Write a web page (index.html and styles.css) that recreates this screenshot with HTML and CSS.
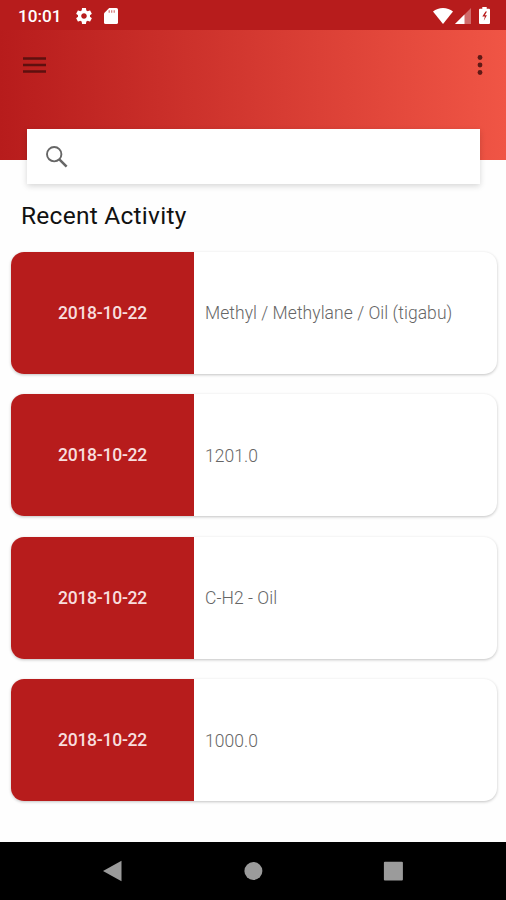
FILE: index.html
```html
<!DOCTYPE html>
<html lang="en">
<head>
    <meta charset="UTF-8">
    <meta name="viewport" content="width=device-width, initial-scale=1.0">
    <title>Recent Activity</title>
    <link rel="stylesheet" href="styles.css">
</head>
<body>
    <div class="status-bar">
        <span class="clock">10:01</span>
        <svg class="icon-gear" viewBox="2 2 20 20"><path d="M19.43 12.98c.04-.32.07-.64.07-.98s-.03-.66-.07-.98l2.11-1.65c.19-.15.24-.42.12-.64l-2-3.46c-.12-.22-.39-.3-.61-.22l-2.49 1c-.52-.4-1.08-.73-1.69-.98l-.38-2.65C14.46 2.18 14.25 2 14 2h-4c-.25 0-.46.18-.49.42l-.38 2.65c-.61.25-1.17.59-1.69.98l-2.49-1c-.23-.09-.49 0-.61.22l-2 3.46c-.13.22-.07.49.12.64l2.11 1.65c-.04.32-.07.65-.07.98s.03.66.07.98l-2.11 1.65c-.19.15-.24.42-.12.64l2 3.46c.12.22.39.3.61.22l2.49-1c.52.4 1.08.73 1.69.98l.38 2.65c.03.24.24.42.49.42h4c.25 0 .46-.18.49-.42l.38-2.65c.61-.25 1.17-.59 1.69-.98l2.49 1c.23.09.49 0 .61-.22l2-3.46c.12-.22.07-.49-.12-.64l-2.11-1.65zM12 15.5c-1.93 0-3.5-1.57-3.5-3.5s1.57-3.5 3.5-3.5 3.5 1.57 3.5 3.5-1.57 3.5-3.5 3.5z"/></svg>
        <svg class="icon-sd" viewBox="0 0 14 16"><path d="M5.2 0H12.4Q14 0 14 1.6V14.4Q14 16 12.4 16H1.6Q0 16 0 14.4V5.2Z"/><path class="slot" d="M5.2 2.2v2.6M7.7 2.2v2.6M10.2 2.2v2.6"/></svg>
        <div class="status-right">
            <svg class="icon-wifi" viewBox="0 0 20 16"><path d="M10 16 0 3.6C2.8 1.3 6.2 0 10 0s7.2 1.3 10 3.6z"/></svg>
            <svg class="icon-signal" viewBox="0 0 16 16"><path class="weak" d="M0 16 16 0v16z"/><path d="M0 16 9.5 6.5V16z"/></svg>
            <svg class="icon-battery" viewBox="0 0 11 17"><path d="M3.3 0h4.4v1.7H10q1 0 1 1V16q0 1-1 1H1q-1 0-1-1V2.7q0-1 1-1h2.3z"/><path class="bolt" d="M6.500 4.500 3.300 9.500h2.600L4.800 13.800 7.900 8.300H5.800L8 4.500z"/></svg>
        </div>
    </div>

    <header class="header">
        <div class="toolbar">
            <svg class="icon-menu" viewBox="0 0 23 16"><path d="M0 1.5h23M0 8h23M0 14.5h23"/></svg>
            <svg class="icon-more" viewBox="0 0 6 20"><circle cx="3" cy="2.5" r="2.4"/><circle cx="3" cy="10" r="2.4"/><circle cx="3" cy="17.5" r="2.4"/></svg>
        </div>
    </header>

    <div class="search-box">
        <svg class="icon-search" viewBox="0 0 22 22"><circle cx="8.2" cy="8.2" r="7.2"/><path class="handle" d="M13.6 13.6 20.6 20.6"/></svg>
    </div>

    <main class="content">
        <h1 class="title">Recent Activity</h1>
        <div class="card-list">
            <div class="card">
                <div class="card-date">2018-10-22</div>
                <div class="card-text">Methyl / Methylane / Oil (tigabu)</div>
            </div>
            <div class="card">
                <div class="card-date">2018-10-22</div>
                <div class="card-text">1201.0</div>
            </div>
            <div class="card">
                <div class="card-date">2018-10-22</div>
                <div class="card-text">C-H2 - Oil</div>
            </div>
            <div class="card">
                <div class="card-date">2018-10-22</div>
                <div class="card-text">1000.0</div>
            </div>
        </div>
    </main>

    <nav class="nav-bar">
        <svg class="icon-nav" viewBox="0 0 22 22"><path d="M1 11 19.500.700v20.600z"/></svg>
        <svg class="icon-nav" viewBox="0 0 22 22"><circle cx="11.400" cy="11" r="9"/></svg>
        <svg class="icon-nav" viewBox="0 0 22 22"><rect x="1.900" y="1.800" width="19" height="18.800" rx="1"/></svg>
    </nav>
</body>
</html>
```
FILE: styles.css
```css
* {
    box-sizing: border-box;
}

body {
    font-family: Roboto, sans-serif;
    margin: 0;
    height: 900px;
    display: flex;
    flex-direction: column;
    background-color: #fefefe;
    overflow: hidden;
}

svg {
    display: block;
    flex: none;
}

/* Status bar */
.status-bar {
    height: 30px;
    padding: 1px 16px 0 18px;
    display: flex;
    align-items: center;
    background-color: #b71c1c;
    color: white;
    fill: white;
}

.clock {
    width: 58px;
    font-size: 17.2px;
    font-weight: 500;
}

.icon-gear {
    width: 16px;
    height: 16px;
}

.icon-sd {
    width: 14px;
    height: 16px;
    margin-left: 12px;
}

.slot {
    stroke: #b71c1c;
    stroke-width: 1.2;
    opacity: 0.6;
}

.status-right {
    margin-left: auto;
    display: flex;
    align-items: center;
}

.icon-wifi {
    width: 20px;
    height: 16px;
    margin-right: 2px;
}

.icon-signal {
    width: 16px;
    height: 16px;
    margin-right: 8px;
}

.weak {
    opacity: 0.35;
}

.icon-battery {
    width: 11px;
    height: 17px;
}

.bolt {
    fill: #b71c1c;
}

/* Header */
.header {
    height: 130px;
    padding: 24px 23px;
    background: linear-gradient(to right, #b71c1c, #f05545);
}

.toolbar {
    height: 21px;
    display: flex;
    align-items: center;
    justify-content: space-between;
}

.icon-menu {
    width: 23px;
    height: 16px;
    stroke: #5e100f;
    stroke-width: 2.3;
}

.icon-more {
    width: 6px;
    height: 20px;
    fill: #5e1a16;
}

.search-box {
    height: 55px;
    margin: -31px 26px 0 27px;
    padding-left: 19px;
    display: flex;
    align-items: center;
    background-color: white;
    box-shadow: 0 2px 6px rgba(0, 0, 0, 0.16);
}

.icon-search {
    width: 22px;
    height: 22px;
    fill: none;
    stroke: #666;
    stroke-width: 1.9;
}

.handle {
    stroke-width: 2.5;
}

/* Activity list */
.content {
    flex: 1;
    padding: 16px 9px 0 11px;
}

.title {
    margin: 0 0 20.5px 10px;
    font-size: 24.5px;
    line-height: 31px;
    font-weight: 400;
    letter-spacing: 0.25px;
    color: #111;
}

.card-list {
    display: flex;
    flex-direction: column;
    gap: 20.5px;
}

.card {
    height: 122px;
    display: flex;
    align-items: center;
    border-radius: 13px;
    overflow: hidden;
    background-color: white;
    box-shadow: 0 1px 3px rgba(0, 0, 0, 0.24);
}

.card-date {
    width: 183px;
    height: 100%;
    display: flex;
    align-items: center;
    justify-content: center;
    background-color: #b71c1c;
    color: #f8dede;
    font-size: 17.5px;
    font-weight: 500;
    letter-spacing: -0.25px;
}

.card-text {
    padding: 1px 0 0 11px;
    font-size: 17.5px;
    font-weight: 300;
    letter-spacing: 0.05px;
    color: #666;
}

/* Navigation bar */
.nav-bar {
    height: 58px;
    padding: 0 102px;
    display: flex;
    align-items: center;
    justify-content: space-between;
    background-color: black;
    fill: #9b9b9b;
}

.icon-nav {
    width: 22px;
    height: 22px;
}
```
